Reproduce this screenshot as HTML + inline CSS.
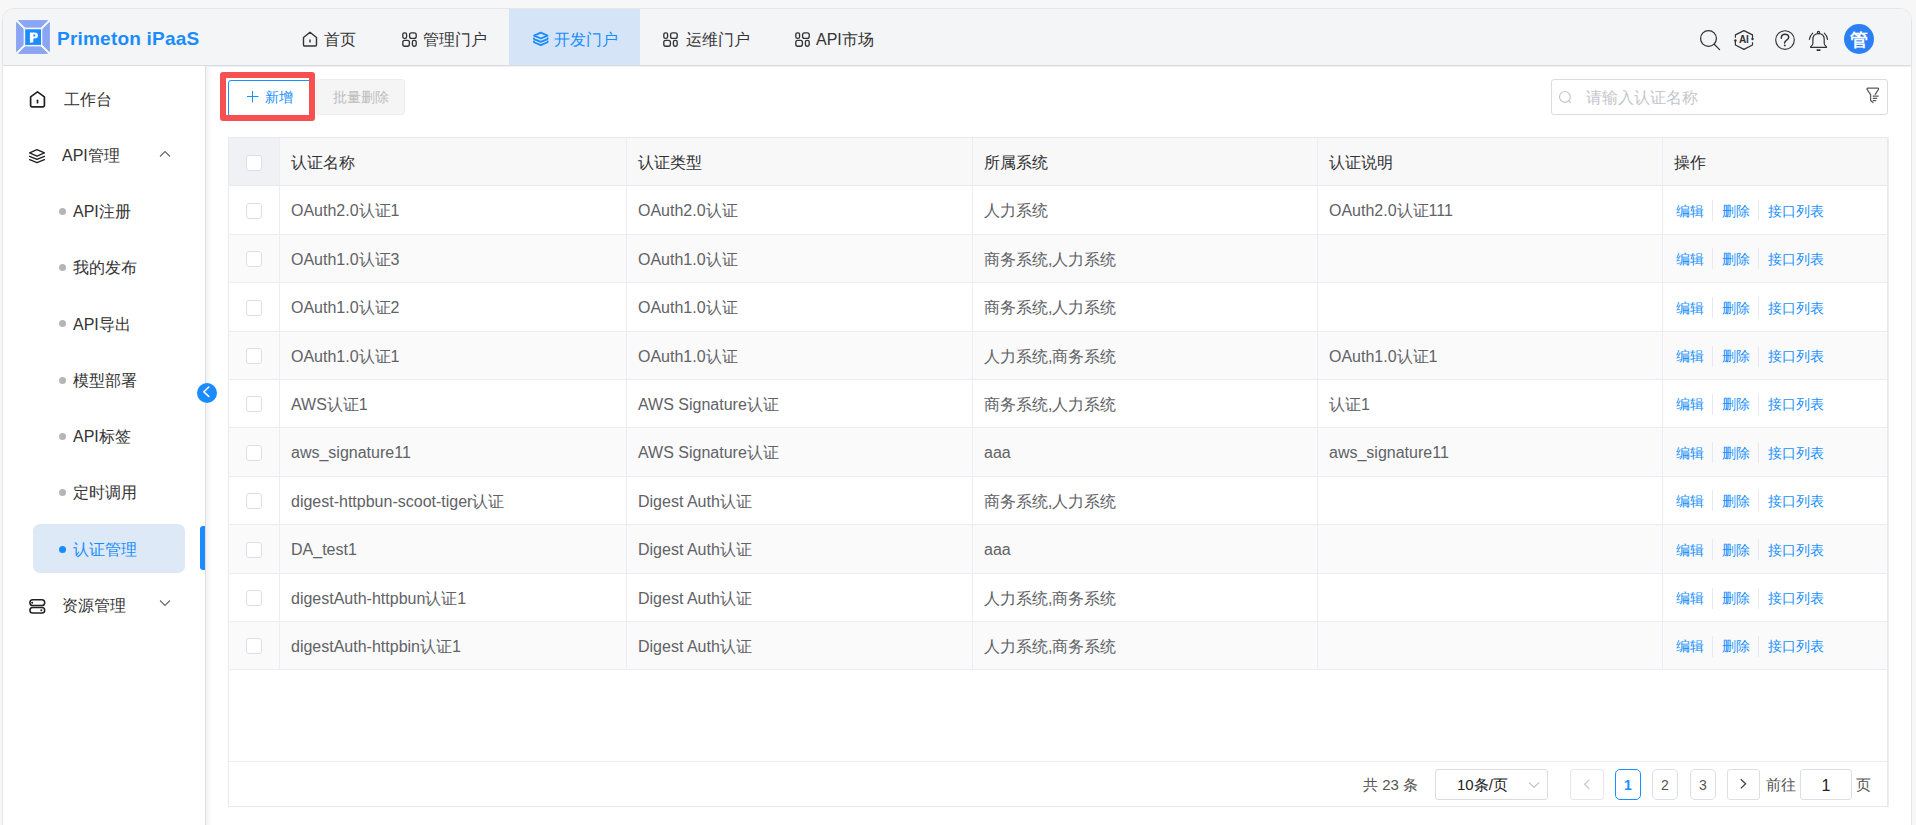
<!DOCTYPE html>
<html><head><meta charset="utf-8">
<style>
*{box-sizing:border-box;margin:0;padding:0}
html,body{width:1916px;height:825px;overflow:hidden;background:#f7f7f7;font-family:"Liberation Sans",sans-serif;color:#333}
body{position:relative}
.a{position:absolute}
#wrap{position:absolute;left:2px;top:8px;width:1910px;height:840px;border:1px solid #e6e6e6;border-radius:12px;background:#fff;overflow:hidden}
#hdr{position:absolute;left:3px;top:9px;width:1908px;height:57px;background:#f4f5f7;border-bottom:1px solid #dcdcdc;border-radius:11px 11px 0 0}
.nav{position:absolute;top:12px;height:56px;font-size:16px;line-height:56px;color:#333;white-space:nowrap}
#side{position:absolute;left:3px;top:66px;width:203px;height:780px;background:#fff;border-right:1px solid #dedede}
.shadow{position:absolute;left:206px;top:66px;width:6px;height:780px;background:linear-gradient(to right,#f2f2f2,rgba(255,255,255,0))}
.mi{position:absolute;font-size:16px;line-height:20px;color:#333;white-space:nowrap}
.dot{position:absolute;width:7px;height:7px;border-radius:50%;background:#b5b5b5}
.th{position:absolute;top:139px;height:47px;line-height:47px;font-size:16px;color:#303133;white-space:nowrap}
.td{position:absolute;font-size:16px;color:#606266;white-space:nowrap;padding-top:1px}
.op{position:absolute;font-size:14px;color:#1890ff;white-space:nowrap;padding-top:1px}
.sep{position:absolute;width:1px;height:21px;background:#e8eaf0}
.cb{position:absolute;width:16px;height:16px;border:1px solid #dcdfe6;border-radius:3px;background:#fff}
.pg{position:absolute;top:769px;height:31px;line-height:31px;font-size:15px;color:#555;white-space:nowrap}
.pbtn{position:absolute;top:769px;width:26px;height:31px;border:1px solid #dcdfe6;border-radius:5px;text-align:center;line-height:30px;font-size:14px;color:#555}
</style></head><body>
<div id="wrap"></div>
<div id="hdr"></div>
<!-- logo -->
<svg class="a" style="left:16px;top:20px" width="35" height="34" viewBox="0 0 35 34">
  <g fill="#8aa5f4" stroke="#8aa5f4" stroke-width="1" stroke-linejoin="round">
    <path d="M2.5 0.6 H31.5 L25 7.1 H9 Z"/>
    <path d="M2.5 33.4 H31.5 L25 26.9 H9 Z"/>
    <path d="M0.6 2.5 V31.5 L7.1 25 V9 Z"/>
    <path d="M33.4 2.5 V31.5 L26.9 25 V9 Z"/>
  </g>
  <rect x="9.2" y="9.3" width="15.8" height="15.6" fill="#1a8cff"/>
  <path d="M13.9 12.5 H18.4 Q22 12.5 22 15.5 Q22 18.5 18.4 18.5 H17.3 V22.2 L13.9 22.8 Z M17.3 14.4 V16.6 H18.2 Q19.4 16.6 19.4 15.5 Q19.4 14.4 18.2 14.4 Z" fill="#fff" fill-rule="evenodd"/>
</svg>
<div class="a" style="left:57px;top:9px;height:56px;line-height:59px;font-size:19px;font-weight:bold;letter-spacing:0.22px;color:#1a8cff">Primeton iPaaS</div>


<!-- nav -->
<div class="a" style="left:509px;top:9px;width:131px;height:56px;background:#d5e5f7"></div>
<svg class="a" style="left:302px;top:31px" width="16" height="16" viewBox="0 0 16 16" fill="none" stroke="#333" stroke-width="1.4" stroke-linejoin="round"><path d="M1.5 6.5 L8 1.2 L14.5 6.5 V13.8 Q14.5 15 13.3 15 H2.7 Q1.5 15 1.5 13.8 Z"/><path d="M8 9 V11" stroke-linecap="round"/></svg>
<div class="nav" style="left:324px">首页</div>
<svg class="a" style="left:402px;top:32px" width="15" height="15" viewBox="0 0 15 15" fill="none" stroke="#333" stroke-width="1.35"><rect x="0.8" y="0.8" width="3.8" height="5.6" rx="1.6"/><rect x="7.6" y="0.8" width="6.6" height="5.6" rx="1.9"/><rect x="0.8" y="8.4" width="6.6" height="5.8" rx="1.9"/><rect x="10.4" y="8.4" width="3.8" height="5.8" rx="1.6"/></svg>
<div class="nav" style="left:423px">管理门户</div>
<svg class="a" style="left:532px;top:31px" width="18" height="16" viewBox="0 0 18 16" fill="none" stroke="#1a8cff" stroke-width="1.85" stroke-linejoin="round" stroke-linecap="round"><path d="M2.1 4.6 L8.8 1.6 L15.5 4.6 L8.8 7.5 Z"/><path d="M1.9 7.3 Q2 8 2.6 8.3 L8.8 10.9 L15 8.3 Q15.6 8 15.7 7.3"/><path d="M1.9 10.5 Q2 11.2 2.6 11.5 L8.8 14.2 L15 11.5 Q15.6 11.2 15.7 10.5"/></svg>
<div class="nav" style="left:554px;color:#1a8cff">开发门户</div>
<svg class="a" style="left:663px;top:32px" width="15" height="15" viewBox="0 0 15 15" fill="none" stroke="#333" stroke-width="1.35"><rect x="0.8" y="0.8" width="3.8" height="5.6" rx="1.6"/><rect x="7.6" y="0.8" width="6.6" height="5.6" rx="1.9"/><rect x="0.8" y="8.4" width="6.6" height="5.8" rx="1.9"/><rect x="10.4" y="8.4" width="3.8" height="5.8" rx="1.6"/></svg>
<div class="nav" style="left:686px">运维门户</div>
<svg class="a" style="left:795px;top:32px" width="15" height="15" viewBox="0 0 15 15" fill="none" stroke="#333" stroke-width="1.35"><rect x="0.8" y="0.8" width="3.8" height="5.6" rx="1.6"/><rect x="7.6" y="0.8" width="6.6" height="5.6" rx="1.9"/><rect x="0.8" y="8.4" width="6.6" height="5.8" rx="1.9"/><rect x="10.4" y="8.4" width="3.8" height="5.8" rx="1.6"/></svg>
<div class="nav" style="left:816px">API市场</div>
<!-- right icons -->
<svg class="a" style="left:1699px;top:29px" width="23" height="23" viewBox="0 0 23 23" fill="none" stroke="#333" stroke-width="1.25" stroke-linecap="round"><circle cx="9.5" cy="9.5" r="7.9"/><path d="M15.2 15.2 L20.6 20.6"/></svg>
<svg class="a" style="left:1733px;top:29px" width="22" height="22" viewBox="0 0 22 22" fill="none" stroke="#333" stroke-width="1.2" stroke-linejoin="round"><path d="M2.4 8.7 V5.9 L10.9 1.6 L19.5 5.9 V10"/><path d="M19.5 13.3 V16 L10.9 20.4 L2.4 16 V11.5"/><circle cx="2.4" cy="11.5" r="1.2" fill="#333" stroke="none"/><circle cx="19.5" cy="10" r="1.2" fill="#333" stroke="none"/><text x="10.9" y="13.9" font-family="Liberation Sans" font-size="10" font-weight="bold" fill="#333" stroke="none" text-anchor="middle">AI</text></svg>
<svg class="a" style="left:1774px;top:29px" width="22" height="22" viewBox="0 0 22 22" fill="none" stroke="#333" stroke-width="1.15"><circle cx="11" cy="11" r="9.3"/><path d="M7.3 9.2 Q7.3 5.3 11 5.3 Q14.7 5.3 14.7 8.3 Q14.7 10.1 12.4 11.4 Q10.6 12.5 10.6 14" stroke-width="1.5" stroke-linecap="round"/><circle cx="10.8" cy="16.4" r="0.95" fill="#333" stroke="none"/></svg>
<svg class="a" style="left:1808px;top:29px" width="22" height="23" viewBox="0 0 22 23" fill="none" stroke="#333" stroke-width="1.2" stroke-linecap="round" stroke-linejoin="round"><path d="M4.9 14.2 V10.6 Q4.9 4.7 10.5 4.7 Q16.2 4.7 16.2 10.6 V14.2 Q16.2 16.3 18 17.2 Q18.8 17.7 18.4 18.3 H2.7 Q2.3 17.7 3.1 17.2 Q4.9 16.3 4.9 14.2 Z"/><circle cx="10.5" cy="3.4" r="1.1"/><path d="M9.2 21.1 H11.9" stroke-width="1.6"/><path d="M4.7 4.1 Q2.2 6.4 1.4 10.3"/><path d="M16.3 4.1 Q18.8 6.4 19.5 10.3"/></svg>
<div class="a" style="left:1844px;top:24px;width:30px;height:30px;border-radius:50%;background:#2b80f6;color:#fff;font-size:18px;font-weight:bold;line-height:33px;text-align:center">管</div>

<div id="side"></div>
<div class="shadow"></div>
<div class="a" style="left:206px;top:66px;width:1705px;height:1px;background:#eef1f6"></div>


<!-- toolbar -->
<div class="a" style="left:228px;top:80px;width:84px;height:37px;border:1px solid #1890ff;border-radius:3px;background:#fff"></div>
<svg class="a" style="left:247px;top:91px" width="12" height="12" viewBox="0 0 12 12" stroke="#1890ff" stroke-width="1"><path d="M5.5 0 V11.5 M0 5.5 H11.5"/></svg>
<div class="a" style="left:265px;top:79px;height:36px;line-height:36px;font-size:14px;color:#1890ff">新增</div>
<div class="a" style="left:316px;top:79px;width:89px;height:36px;border:1px solid #eeeeee;border-radius:3px;background:#f5f5f5;font-size:14px;line-height:34px;text-align:center;color:#bdbdbd">批量删除</div>
<div class="a" style="left:220px;top:72px;width:95px;height:49px;border:6px solid #f75050;border-radius:3px"></div>
<!-- search -->
<div class="a" style="left:1551px;top:79px;width:337px;height:36px;border:1px solid #dcdcdc;border-radius:3px;background:#fff"></div>
<svg class="a" style="left:1558px;top:90px" width="15" height="15" viewBox="0 0 15 15" fill="none" stroke="#c0c4cc" stroke-width="1.15" stroke-linecap="round"><circle cx="6.9" cy="6.9" r="5.4"/><path d="M10.9 10.9 L12.3 12.3"/></svg>
<div class="a" style="left:1586px;top:80px;height:36px;line-height:36px;font-size:16px;color:#c3c6cc">请输入认证名称</div>
<svg class="a" style="left:1860px;top:82px" width="25" height="25" viewBox="0 0 25 25" fill="none" stroke="#5a5a5a" stroke-width="1.25" stroke-linejoin="round" stroke-linecap="round"><path d="M13 20.5 L10.6 18.6 V12.6 L7.2 7.6 Q6.6 6 8 6 H17.6 Q19 6 18.4 7.6 L15.2 12.4"/><path d="M13.2 14.1 H18.3 M13.2 16.3 H16.8 M13.2 18.5 H15.8"/></svg>
<!-- table -->
<div class="a" style="left:228px;top:137px;width:1660px;height:670px;border:1px solid #e8eaf0;background:#fff"></div>
<div class="a" style="left:229px;top:138px;width:50px;height:47px;background:#f0f1f4"></div>
<div class="a" style="left:279px;top:138px;width:1608px;height:47px;background:#f8f8f9"></div>
<div class="a" style="left:229px;top:185px;width:1658px;height:1px;background:#e8eaf0"></div>
<div class="a" style="left:229px;top:234px;width:1658px;height:1px;background:#ebedf2"></div>
<div class="a" style="left:229px;top:235px;width:1658px;height:47px;background:#fafafa"></div>
<div class="a" style="left:229px;top:282px;width:1658px;height:1px;background:#ebedf2"></div>
<div class="a" style="left:229px;top:331px;width:1658px;height:1px;background:#ebedf2"></div>
<div class="a" style="left:229px;top:332px;width:1658px;height:47px;background:#fafafa"></div>
<div class="a" style="left:229px;top:379px;width:1658px;height:1px;background:#ebedf2"></div>
<div class="a" style="left:229px;top:427px;width:1658px;height:1px;background:#ebedf2"></div>
<div class="a" style="left:229px;top:428px;width:1658px;height:48px;background:#fafafa"></div>
<div class="a" style="left:229px;top:476px;width:1658px;height:1px;background:#ebedf2"></div>
<div class="a" style="left:229px;top:524px;width:1658px;height:1px;background:#ebedf2"></div>
<div class="a" style="left:229px;top:525px;width:1658px;height:48px;background:#fafafa"></div>
<div class="a" style="left:229px;top:573px;width:1658px;height:1px;background:#ebedf2"></div>
<div class="a" style="left:229px;top:621px;width:1658px;height:1px;background:#ebedf2"></div>
<div class="a" style="left:229px;top:622px;width:1658px;height:47px;background:#fafafa"></div>
<div class="a" style="left:229px;top:669px;width:1658px;height:1px;background:#ebedf2"></div>
<div class="a" style="left:279px;top:138px;width:1px;height:531px;background:#ebedf2"></div>
<div class="a" style="left:626px;top:138px;width:1px;height:531px;background:#ebedf2"></div>
<div class="a" style="left:972px;top:138px;width:1px;height:531px;background:#ebedf2"></div>
<div class="a" style="left:1317px;top:138px;width:1px;height:531px;background:#ebedf2"></div>
<div class="a" style="left:1662px;top:138px;width:1px;height:531px;background:#ebedf2"></div>
<div class="th" style="left:291px">认证名称</div>
<div class="th" style="left:638px">认证类型</div>
<div class="th" style="left:984px">所属系统</div>
<div class="th" style="left:1329px">认证说明</div>
<div class="th" style="left:1674px">操作</div>
<div class="cb" style="left:246px;top:155px"></div>
<div class="cb" style="left:246px;top:203px"></div>
<div class="td" style="left:291px;top:186px;height:48px;line-height:48px">OAuth2.0认证1</div>
<div class="td" style="left:638px;top:186px;height:48px;line-height:48px">OAuth2.0认证</div>
<div class="td" style="left:984px;top:186px;height:48px;line-height:48px">人力系统</div>
<div class="td" style="left:1329px;top:186px;height:48px;line-height:48px">OAuth2.0认证111</div>
<div class="op" style="left:1676px;top:186px;height:48px;line-height:48px">编辑</div><div class="sep" style="left:1712px;top:200px"></div><div class="op" style="left:1722px;top:186px;height:48px;line-height:48px">删除</div><div class="sep" style="left:1758px;top:200px"></div><div class="op" style="left:1768px;top:186px;height:48px;line-height:48px">接口列表</div>
<div class="cb" style="left:246px;top:251px"></div>
<div class="td" style="left:291px;top:235px;height:47px;line-height:47px">OAuth1.0认证3</div>
<div class="td" style="left:638px;top:235px;height:47px;line-height:47px">OAuth1.0认证</div>
<div class="td" style="left:984px;top:235px;height:47px;line-height:47px">商务系统,人力系统</div>
<div class="op" style="left:1676px;top:235px;height:47px;line-height:47px">编辑</div><div class="sep" style="left:1712px;top:248px"></div><div class="op" style="left:1722px;top:235px;height:47px;line-height:47px">删除</div><div class="sep" style="left:1758px;top:248px"></div><div class="op" style="left:1768px;top:235px;height:47px;line-height:47px">接口列表</div>
<div class="cb" style="left:246px;top:300px"></div>
<div class="td" style="left:291px;top:283px;height:48px;line-height:48px">OAuth1.0认证2</div>
<div class="td" style="left:638px;top:283px;height:48px;line-height:48px">OAuth1.0认证</div>
<div class="td" style="left:984px;top:283px;height:48px;line-height:48px">商务系统,人力系统</div>
<div class="op" style="left:1676px;top:283px;height:48px;line-height:48px">编辑</div><div class="sep" style="left:1712px;top:297px"></div><div class="op" style="left:1722px;top:283px;height:48px;line-height:48px">删除</div><div class="sep" style="left:1758px;top:297px"></div><div class="op" style="left:1768px;top:283px;height:48px;line-height:48px">接口列表</div>
<div class="cb" style="left:246px;top:348px"></div>
<div class="td" style="left:291px;top:332px;height:47px;line-height:47px">OAuth1.0认证1</div>
<div class="td" style="left:638px;top:332px;height:47px;line-height:47px">OAuth1.0认证</div>
<div class="td" style="left:984px;top:332px;height:47px;line-height:47px">人力系统,商务系统</div>
<div class="td" style="left:1329px;top:332px;height:47px;line-height:47px">OAuth1.0认证1</div>
<div class="op" style="left:1676px;top:332px;height:47px;line-height:47px">编辑</div><div class="sep" style="left:1712px;top:346px"></div><div class="op" style="left:1722px;top:332px;height:47px;line-height:47px">删除</div><div class="sep" style="left:1758px;top:346px"></div><div class="op" style="left:1768px;top:332px;height:47px;line-height:47px">接口列表</div>
<div class="cb" style="left:246px;top:396px"></div>
<div class="td" style="left:291px;top:380px;height:47px;line-height:47px">AWS认证1</div>
<div class="td" style="left:638px;top:380px;height:47px;line-height:47px">AWS Signature认证</div>
<div class="td" style="left:984px;top:380px;height:47px;line-height:47px">商务系统,人力系统</div>
<div class="td" style="left:1329px;top:380px;height:47px;line-height:47px">认证1</div>
<div class="op" style="left:1676px;top:380px;height:47px;line-height:47px">编辑</div><div class="sep" style="left:1712px;top:394px"></div><div class="op" style="left:1722px;top:380px;height:47px;line-height:47px">删除</div><div class="sep" style="left:1758px;top:394px"></div><div class="op" style="left:1768px;top:380px;height:47px;line-height:47px">接口列表</div>
<div class="cb" style="left:246px;top:445px"></div>
<div class="td" style="left:291px;top:428px;height:48px;line-height:48px">aws_signature11</div>
<div class="td" style="left:638px;top:428px;height:48px;line-height:48px">AWS Signature认证</div>
<div class="td" style="left:984px;top:428px;height:48px;line-height:48px">aaa</div>
<div class="td" style="left:1329px;top:428px;height:48px;line-height:48px">aws_signature11</div>
<div class="op" style="left:1676px;top:428px;height:48px;line-height:48px">编辑</div><div class="sep" style="left:1712px;top:442px"></div><div class="op" style="left:1722px;top:428px;height:48px;line-height:48px">删除</div><div class="sep" style="left:1758px;top:442px"></div><div class="op" style="left:1768px;top:428px;height:48px;line-height:48px">接口列表</div>
<div class="cb" style="left:246px;top:493px"></div>
<div class="td" style="left:291px;top:477px;height:47px;line-height:47px">digest-httpbun-scoot-tiger认证</div>
<div class="td" style="left:638px;top:477px;height:47px;line-height:47px">Digest Auth认证</div>
<div class="td" style="left:984px;top:477px;height:47px;line-height:47px">商务系统,人力系统</div>
<div class="op" style="left:1676px;top:477px;height:47px;line-height:47px">编辑</div><div class="sep" style="left:1712px;top:490px"></div><div class="op" style="left:1722px;top:477px;height:47px;line-height:47px">删除</div><div class="sep" style="left:1758px;top:490px"></div><div class="op" style="left:1768px;top:477px;height:47px;line-height:47px">接口列表</div>
<div class="cb" style="left:246px;top:542px"></div>
<div class="td" style="left:291px;top:525px;height:48px;line-height:48px">DA_test1</div>
<div class="td" style="left:638px;top:525px;height:48px;line-height:48px">Digest Auth认证</div>
<div class="td" style="left:984px;top:525px;height:48px;line-height:48px">aaa</div>
<div class="op" style="left:1676px;top:525px;height:48px;line-height:48px">编辑</div><div class="sep" style="left:1712px;top:539px"></div><div class="op" style="left:1722px;top:525px;height:48px;line-height:48px">删除</div><div class="sep" style="left:1758px;top:539px"></div><div class="op" style="left:1768px;top:525px;height:48px;line-height:48px">接口列表</div>
<div class="cb" style="left:246px;top:590px"></div>
<div class="td" style="left:291px;top:574px;height:47px;line-height:47px">digestAuth-httpbun认证1</div>
<div class="td" style="left:638px;top:574px;height:47px;line-height:47px">Digest Auth认证</div>
<div class="td" style="left:984px;top:574px;height:47px;line-height:47px">人力系统,商务系统</div>
<div class="op" style="left:1676px;top:574px;height:47px;line-height:47px">编辑</div><div class="sep" style="left:1712px;top:588px"></div><div class="op" style="left:1722px;top:574px;height:47px;line-height:47px">删除</div><div class="sep" style="left:1758px;top:588px"></div><div class="op" style="left:1768px;top:574px;height:47px;line-height:47px">接口列表</div>
<div class="cb" style="left:246px;top:638px"></div>
<div class="td" style="left:291px;top:622px;height:47px;line-height:47px">digestAuth-httpbin认证1</div>
<div class="td" style="left:638px;top:622px;height:47px;line-height:47px">Digest Auth认证</div>
<div class="td" style="left:984px;top:622px;height:47px;line-height:47px">人力系统,商务系统</div>
<div class="op" style="left:1676px;top:622px;height:47px;line-height:47px">编辑</div><div class="sep" style="left:1712px;top:636px"></div><div class="op" style="left:1722px;top:622px;height:47px;line-height:47px">删除</div><div class="sep" style="left:1758px;top:636px"></div><div class="op" style="left:1768px;top:622px;height:47px;line-height:47px">接口列表</div>
<div class="a" style="left:229px;top:761px;width:1659px;height:1px;background:#ebedf2"></div>
<div class="a" style="left:1888px;top:137px;width:1px;height:670px;background:#eceef4"></div>
<div class="pg" style="left:1363px;">共 23 条</div>
<div class="a" style="left:1435px;top:769px;width:113px;height:31px;border:1px solid #dcdcdc;border-radius:3px"></div>
<div class="pg" style="left:1457px;color:#222">10条/页</div>
<svg class="a" style="left:1528px;top:781px" width="12" height="8" viewBox="0 0 12 8" fill="none" stroke="#c0c4cc" stroke-width="1.1"><path d="M1 1.5 L6 6.5 L11 1.5"/></svg>
<div class="a" style="left:1570px;top:769px;width:34px;height:31px;border:1px solid #e4e7ed;border-radius:3px"></div>
<svg class="a" style="left:1582px;top:778px" width="9" height="12" viewBox="0 0 9 12" fill="none" stroke="#c8cbd1" stroke-width="1.3"><path d="M7.2 1.8 L2.6 6.3 L7.2 10.8"/></svg>
<div class="pbtn" style="left:1615px;border-color:#1890ff;color:#1890ff;font-weight:bold">1</div>
<div class="pbtn" style="left:1652px">2</div>
<div class="pbtn" style="left:1690px">3</div>
<div class="a" style="left:1727px;top:769px;width:33px;height:31px;border:1px solid #dcdfe6;border-radius:3px"></div>
<svg class="a" style="left:1739px;top:778px" width="9" height="12" viewBox="0 0 9 12" fill="none" stroke="#444" stroke-width="1.3"><path d="M1.8 1.2 L6.6 5.8 L1.8 10.4"/></svg>
<div class="pg" style="left:1766px">前往</div>
<div class="a" style="left:1800px;top:769px;width:52px;height:31px;border:1px solid #dcdfe6;border-radius:3px;text-align:center;line-height:31px;font-size:16px;color:#222">1</div>
<div class="pg" style="left:1856px">页</div>

<!-- sidebar -->
<svg class="a" style="left:29px;top:91px" width="17" height="17" viewBox="0 0 17 17" fill="none" stroke="#222" stroke-width="1.7" stroke-linejoin="round"><path d="M1.6 5.9 L8.5 0.9 L15.4 5.9 V14.6 Q15.4 15.8 14.2 15.8 H2.8 Q1.6 15.8 1.6 14.6 Z"/><path d="M8.5 9.3 V11.7" stroke-linecap="round"/></svg>
<div class="mi" style="left:64px;top:90px">工作台</div>
<svg class="a" style="left:28px;top:148px" width="18" height="16" viewBox="0 0 18 16" fill="none" stroke="#222" stroke-width="1.35" stroke-linejoin="round" stroke-linecap="round"><path d="M9 1.7 L16.4 4.9 L9 8.1 L1.6 4.9 Z"/><path d="M1.6 8.3 L9 11.3 L16.4 8.3"/><path d="M1.6 11.6 L9 14.7 L16.4 11.6"/></svg>
<div class="mi" style="left:62px;top:146px">API管理</div>
<svg class="a" style="left:159px;top:150px" width="12" height="8" viewBox="0 0 12 8" fill="none" stroke="#666" stroke-width="1.1"><path d="M1 6.5 L6 1.5 L11 6.5"/></svg>
<div class="dot" style="left:59px;top:208px"></div><div class="mi" style="left:73px;top:202px">API注册</div>
<div class="dot" style="left:59px;top:264px"></div><div class="mi" style="left:73px;top:258px">我的发布</div>
<div class="dot" style="left:59px;top:320px"></div><div class="mi" style="left:73px;top:315px">API导出</div>
<div class="dot" style="left:59px;top:377px"></div><div class="mi" style="left:73px;top:371px">模型部署</div>
<div class="dot" style="left:59px;top:433px"></div><div class="mi" style="left:73px;top:427px">API标签</div>
<div class="dot" style="left:59px;top:489px"></div><div class="mi" style="left:73px;top:483px">定时调用</div>
<div class="a" style="left:33px;top:524px;width:152px;height:49px;border-radius:7px;background:#dde9f6"></div>
<div class="dot" style="left:59px;top:546px;background:#1a8cff"></div><div class="mi" style="left:73px;top:540px;color:#1a8cff">认证管理</div>
<div class="a" style="left:200px;top:526px;width:5px;height:44px;border-radius:3px 0 0 3px;background:#1a8cff"></div>
<svg class="a" style="left:28px;top:598px" width="18" height="17" viewBox="0 0 18 17" fill="none" stroke="#222" stroke-width="1.5"><rect x="1.9" y="1.8" width="14.8" height="5.7" rx="2.85"/><rect x="1.9" y="9.4" width="14.8" height="5.6" rx="2.8"/><circle cx="4.2" cy="4.65" r="1" fill="#222" stroke="none"/><circle cx="13.3" cy="12.2" r="1" fill="#222" stroke="none"/></svg>
<div class="mi" style="left:62px;top:596px">资源管理</div>
<svg class="a" style="left:159px;top:599px" width="12" height="8" viewBox="0 0 12 8" fill="none" stroke="#666" stroke-width="1.1"><path d="M1 1.5 L6 6.5 L11 1.5"/></svg>
<div class="a" style="left:197px;top:383px;width:20px;height:20px;border-radius:50%;background:#1a8cff"></div>
<svg class="a" style="left:197px;top:383px" width="20" height="20" viewBox="0 0 20 20" fill="none" stroke="#fff" stroke-width="1.6" stroke-linecap="round" stroke-linejoin="round"><path d="M11.8 4 L6.8 8.8 L11.8 13.4"/></svg>

</body></html>
